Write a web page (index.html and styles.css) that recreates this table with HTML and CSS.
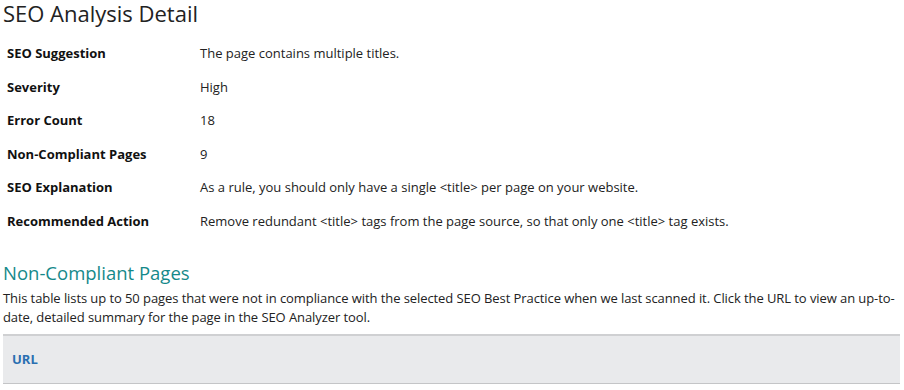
FILE: index.html
```html
<!DOCTYPE html>
<html lang="en">
<head>
  <meta charset="UTF-8" />
  <title>SEO Analysis Detail</title>
  <link rel="stylesheet" href="styles.css">
</head>
<body>
  <h1 class="page-title">SEO Analysis Detail</h1>

  <table class="detail-table">
    <tbody>
      <tr>
        <th>SEO Suggestion</th>
        <td>The page contains multiple titles.</td>
      </tr>
      <tr>
        <th>Severity</th>
        <td>High</td>
      </tr>
      <tr>
        <th>Error Count</th>
        <td>18</td>
      </tr>
      <tr>
        <th>Non-Compliant Pages</th>
        <td>9</td>
      </tr>
      <tr>
        <th>SEO Explanation</th>
        <td>As a rule, you should only have a single &lt;title&gt; per page on your website.</td>
      </tr>
      <tr>
        <th>Recommended Action</th>
        <td>Remove redundant &lt;title&gt; tags from the page source, so that only one &lt;title&gt; tag exists.</td>
      </tr>
    </tbody>
  </table>

  <h2 class="section-title">Non-Compliant Pages</h2>
  <p class="section-text">This table lists up to 50 pages that were not in compliance with the selected SEO Best Practice when we last scanned it. Click the URL to view an up-to-date, detailed summary for the page in the SEO Analyzer tool.</p>

  <table class="pages-table">
    <thead>
      <tr>
        <th>URL</th>
      </tr>
    </thead>
    <tbody></tbody>
  </table>
</body>
</html>
```

FILE: styles.css
```css
body {
  font-family: "Open Sans", "Noto Sans", sans-serif;
  font-size: 13px;
  color: #222;
  background-color: #fff;
  margin: 0;
  padding: 0 4px 0 3px;
}

.page-title {
  font-size: 22px;
  font-weight: 400;
  line-height: 27px;
  margin: 0 0 10px 0;
  color: #222;
}

.detail-table {
  border-collapse: collapse;
  width: 100%;
}

.detail-table th,
.detail-table td {
  text-align: left;
  padding: 8px 4px;
  line-height: 17.5px;
  vertical-align: top;
}

.detail-table th {
  width: 185px;
  font-weight: 700;
  color: #111;
}

.section-title {
  font-size: 18.5px;
  font-weight: 400;
  color: #15898a;
  line-height: 22px;
  margin: 24px 0 5px 0;
}

.section-text {
  margin: 0 0 7px 0;
  line-height: 19px;
  letter-spacing: -0.08px;
}

.pages-table {
  width: 100%;
  border-collapse: collapse;
  background-color: #e9eaec;
  border-top: 2px solid #cfd0d2;
  border-bottom: 1px solid #c4c5c7;
}

.pages-table th {
  text-align: left;
  padding: 15px 9px 15px 9px;
  line-height: 17px;
  color: #2a6fb1;
  font-weight: 700;
}
```
